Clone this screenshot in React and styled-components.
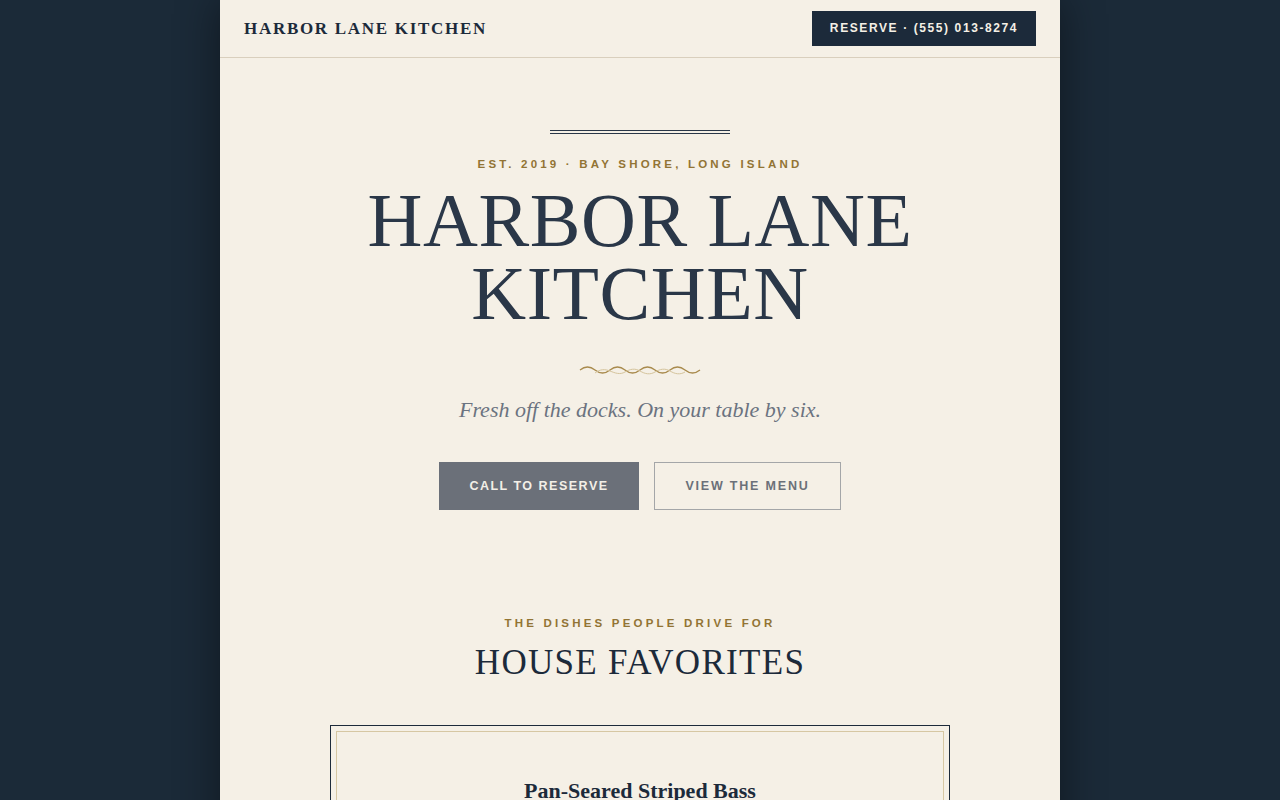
import React from 'react';
import styled, { createGlobalStyle } from 'styled-components';

const GlobalStyle = createGlobalStyle`
  html, body {
    margin: 0;
    padding: 0;
    background: #1b2a38;
    height: 100%;
    overflow: hidden;
  }
  * { box-sizing: border-box; }
`;

const serif = `"Liberation Serif", "DejaVu Serif", serif`;
const sans = `"Liberation Sans", Arial, sans-serif`;

const Page = styled.div`
  width: 840px;
  min-height: 800px;
  margin: 0 auto;
  background: #f5f0e6;
  box-shadow: 0 0 40px rgba(0, 0, 0, 0.45);
`;

const Header = styled.header`
  height: 58px;
  display: flex;
  align-items: center;
  justify-content: space-between;
  padding: 0 24px;
  border-bottom: 1px solid #d9cfbd;
`;

const Logo = styled.div`
  font-family: ${serif};
  font-weight: 700;
  font-size: 17px;
  letter-spacing: 1.7px;
  color: #1c2a3a;
`;

const ReserveButton = styled.a`
  display: flex;
  align-items: center;
  justify-content: center;
  width: 224px;
  height: 35px;
  margin-top: -1px;
  background: #1c2a3a;
  color: #f5f0e6;
  font-family: ${sans};
  font-weight: 700;
  font-size: 12px;
  letter-spacing: 1.6px;
  text-decoration: none;
`;

const Hero = styled.section`
  display: flex;
  flex-direction: column;
  align-items: center;
  padding-top: 72px;
`;

const DoubleRule = styled.div`
  width: 180px;
  height: 4px;
  border-top: 1px solid #2a3748;
  border-bottom: 1px solid #2a3748;
`;

const Eyebrow = styled.div`
  margin-top: ${p => p.$top || 0}px;
  font-family: ${sans};
  font-weight: 700;
  font-size: 11.5px;
  letter-spacing: 3.2px;
  color: #927434;
  text-transform: uppercase;
`;

const Title = styled.h1`
  margin: 14px 0 0;
  font-family: ${serif};
  font-weight: 400;
  font-size: 76px;
  line-height: 73px;
  letter-spacing: 0.6px;
  text-align: center;
  color: #2a3748;
`;

const Flourish = styled.svg`
  display: block;
  margin-top: 35px;
`;

const Tagline = styled.p`
  margin: 20px 0 0;
  font-family: ${serif};
  font-style: italic;
  font-size: 22px;
  color: #6b7380;
`;

const Actions = styled.div`
  display: flex;
  gap: 15px;
  margin-top: 39px;
`;

const HeroButton = styled.a`
  display: flex;
  align-items: center;
  justify-content: center;
  height: 48px;
  width: ${p => p.$w}px;
  font-family: ${sans};
  font-weight: 700;
  font-size: 12.5px;
  letter-spacing: ${p => (p.$solid ? 1.5 : 1.8)}px;
  text-decoration: none;
  background: ${p => (p.$solid ? '#6b7079' : 'transparent')};
  color: ${p => (p.$solid ? '#f3efe7' : '#6b7079')};
  border: 1px solid ${p => (p.$solid ? '#6b7079' : '#a4a6a8')};
`;

const Favorites = styled.section`
  display: flex;
  flex-direction: column;
  align-items: center;
  padding-top: 107px;
`;

const SectionTitle = styled.h2`
  margin: 12px 0 0;
  font-family: ${serif};
  font-weight: 400;
  font-size: 35px;
  line-height: 44px;
  letter-spacing: 1.3px;
  color: #1c2a3a;
`;

const Card = styled.article`
  width: 620px;
  margin-top: 40px;
  padding: 5px;
  border: 1px solid #1c2a3a;
`;

const CardInner = styled.div`
  border: 1px solid #d6c7a3;
  padding: 46px 24px 40px;
  text-align: center;
`;

const DishName = styled.h3`
  margin: 0;
  font-family: ${serif};
  font-weight: 700;
  font-size: 22px;
  color: #1c2a3a;
`;

const DishNote = styled.p`
  margin: 10px 0 0;
  font-family: ${serif};
  font-style: italic;
  font-size: 16px;
  color: #6b7380;
`;

// two interlaced sine strokes under the title
const Wave = () => (
  <Flourish width="122" height="12" viewBox="0 0 122 12">
    <path
      d="M1 5 C6 1 11 1 16 5 S26 9 31 5 S41 1 46 5 S56 9 61 5 S71 1 76 5 S86 9 91 5 S101 1 106 5 S116 9 121 5"
      fill="none"
      stroke="#a88a4c"
      strokeWidth="1.3"
    />
    <path
      d="M16 8 C21 4 26 4 31 6 S41 10 46 7 S56 3 61 6 S71 10 76 7 S86 3 91 6 S101 10 106 7"
      fill="none"
      stroke="#d5c49c"
      strokeWidth="1"
    />
  </Flourish>
);

export default function App() {
  return (
    <>
      <GlobalStyle />
      <Page>
        <Header>
          <Logo>HARBOR LANE KITCHEN</Logo>
          <ReserveButton href="#">RESERVE · (555) 013-8274</ReserveButton>
        </Header>

        <Hero>
          <DoubleRule />
          <Eyebrow $top={24}>Est. 2019 · Bay Shore, Long Island</Eyebrow>
          <Title>
            HARBOR LANE
            <br />
            KITCHEN
          </Title>
          <Wave />
          <Tagline>Fresh off the docks. On your table by six.</Tagline>
          <Actions>
            <HeroButton href="#" $solid $w={200}>CALL TO RESERVE</HeroButton>
            <HeroButton href="#" $w={187}>VIEW THE MENU</HeroButton>
          </Actions>
        </Hero>

        <Favorites>
          <Eyebrow>The dishes people drive for</Eyebrow>
          <SectionTitle>HOUSE FAVORITES</SectionTitle>
          <Card>
            <CardInner>
              <DishName>Pan-Seared Striped Bass</DishName>
              <DishNote>Brown butter, charred lemon, local corn.</DishNote>
            </CardInner>
          </Card>
        </Favorites>
      </Page>
    </>
  );
}
